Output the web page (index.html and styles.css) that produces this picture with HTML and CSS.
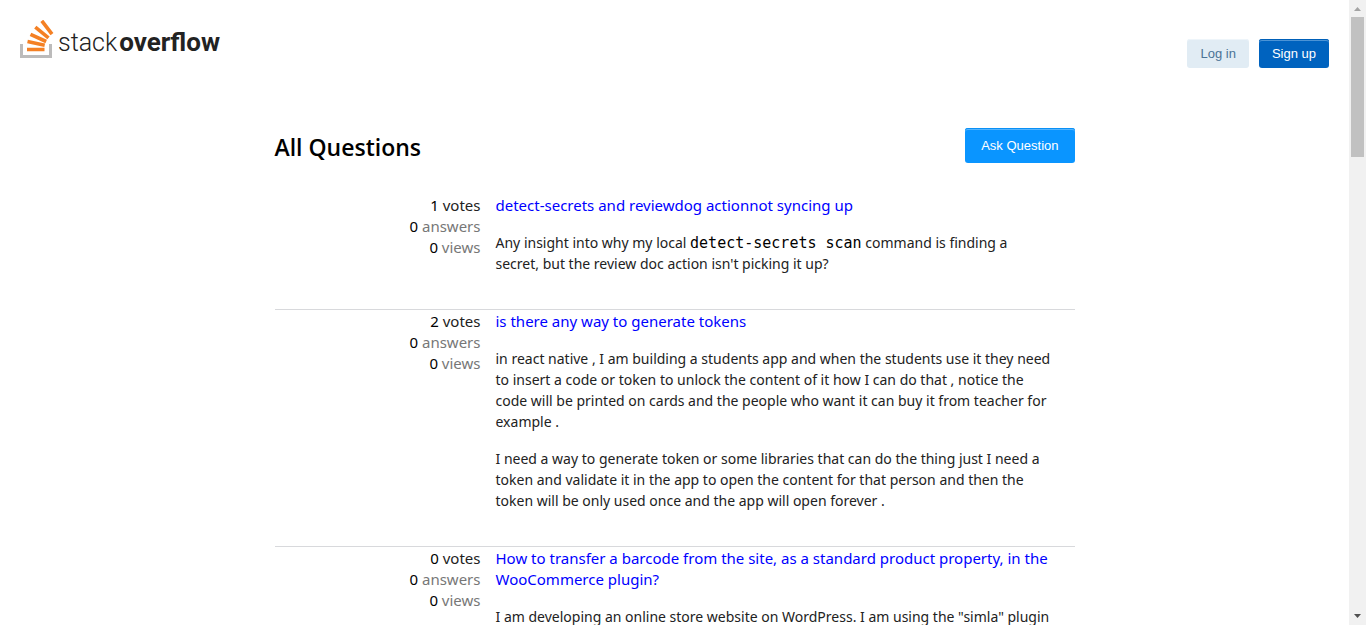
FILE: index.html
```html
<!DOCTYPE html>
<html lang="en">
<head>
<meta charset="utf-8">
<title>All Questions - Stack Overflow</title>
<link rel="stylesheet" href="styles.css">
</head>
<body>
<div class="page">
  <header class="top">
    <a class="logo" href="#">
      <svg class="logo-icon" viewBox="20 20 34 38" aria-hidden="true">
        <path d="M21.5 44v12.500h29V44" fill="none" stroke="#bcbbbb" stroke-width="3"/>
        <path d="M27 49.5h17.5M27.500 41.600l17.2 3.6M30.500 34.300l15.7 7.2M35.300 27.200l13.200 10.600M41.800 20.800l10.200 13.400" fill="none" stroke="#f48024" stroke-width="3.6"/>
      </svg>
      <span class="wordmark"><span class="light">stack</span><b>overflow</b></span>
    </a>
    <nav class="account">
      <button class="btn btn-login" type="button">Log in</button>
      <button class="btn btn-signup" type="button">Sign up</button>
    </nav>
  </header>
  <main class="content">
    <div class="heading">
      <h1>All Questions</h1>
      <button class="btn btn-ask" type="button">Ask Question</button>
    </div>
    <article class="question">
      <div class="stats">
        <div>1 <span class="votes">votes</span></div>
        <div>0 <span class="muted">answers</span></div>
        <div>0 <span class="muted">views</span></div>
      </div>
      <div class="summary">
        <a class="title" href="#">detect-secrets and reviewdog actionnot syncing up</a>
        <p>Any insight into why my local <code>detect-secrets scan</code> command is finding a secret, but the review doc action isn't picking it up?</p>
      </div>
    </article>
    <article class="question">
      <div class="stats">
        <div>2 <span class="votes">votes</span></div>
        <div>0 <span class="muted">answers</span></div>
        <div>0 <span class="muted">views</span></div>
      </div>
      <div class="summary">
        <a class="title" href="#">is there any way to generate tokens</a>
        <p>in react native , I am building a students app and when the students use it they need to insert a code or token to unlock the content of it how I can do that , notice the code will be printed on cards and the people who want it can buy it from teacher for example .</p>
        <p>I need a way to generate token or some libraries that can do the thing just I need a token and validate it in the app to open the content for that person and then the token will be only used once and the app will open forever .</p>
      </div>
    </article>
    <article class="question">
      <div class="stats">
        <div>0 <span class="votes">votes</span></div>
        <div>0 <span class="muted">answers</span></div>
        <div>0 <span class="muted">views</span></div>
      </div>
      <div class="summary">
        <a class="title" href="#">How to transfer a barcode from the site, as a standard product property, in the WooCommerce plugin?</a>
        <p>I am developing an online store website on WordPress. I am using the "simla" plugin</p>
      </div>
    </article>
  </main>
</div>
<div class="scrollbar" aria-hidden="true">
  <svg class="arrow" viewBox="0 0 17 17"><path d="M5 11h7L8.500 7z" fill="#a3a3a3"/></svg>
  <div class="thumb"></div>
  <svg class="arrow arrow-down" viewBox="0 0 17 17"><path d="M5 6h7L8.500 10z" fill="#505050"/></svg>
</div>
</body>
</html>
```
FILE: styles.css
```css
* { box-sizing: border-box; }

body {
  margin: 0;
  display: flex;
  height: 100vh;
  overflow: hidden;
  background: #fff;
  color: #000;
  font-family: "Noto Sans", "Open Sans", sans-serif;
  font-size: 15px;
  line-height: 21px;
}

.page {
  flex: 1;
  min-width: 0;
  overflow: hidden;
}

.top {
  display: flex;
  justify-content: space-between;
  align-items: flex-start;
  padding: 20px 20px 0;
}

.logo {
  display: flex;
  gap: 4px;
  color: #222;
  text-decoration: none;
}

.logo-icon {
  width: 34px;
  height: 38px;
}

.wordmark {
  display: flex;
  align-items: baseline;
  gap: 2px;
  padding-top: 3px;
  font: 25px/38px Roboto, sans-serif;
}

.wordmark .light { font-weight: 300; }
.wordmark b { font-size: 26px; font-weight: 700; }

.account {
  display: flex;
  gap: 10px;
  padding-top: 19px;
}

.btn {
  border: 0;
  border-radius: 3px;
  font: 13px/15px "Liberation Sans", Arial, sans-serif;
}

.btn-login {
  padding: 7px 13px;
  background: #e1ecf4;
  color: #4b7396;
  box-shadow: inset 0 1px 0 #eef5fa;
}

.btn-signup {
  padding: 7px 13px;
  background: #0063bf;
  color: #fff;
  box-shadow: inset 0 1px 0 #0060b8, inset 0 2px 0 #4c94d6;
}

.btn-ask {
  padding: 10px 16px;
  background: #0a95ff;
  color: #fff;
  box-shadow: inset 0 1px 0 #0a90f5, inset 0 2px 0 #53b4ff;
}

.content {
  max-width: 800px;
  margin: 60px auto 0;
}

.heading {
  display: flex;
  justify-content: space-between;
  align-items: center;
  height: 35px;
  margin-bottom: 31px;
}

h1 {
  margin: 0;
  padding-top: 2px;
  font-family: "Open Sans", sans-serif;
  font-size: 23px;
  font-weight: 600;
  line-height: 32px;
}

.question {
  display: grid;
  grid-template-columns: 206px 1fr;
  column-gap: 15px;
  padding: 1px 23px 19px 0;
  border-bottom: 1px solid #d8d9dc;
}

.stats { text-align: right; }
.votes { color: #222; }
.muted { color: #777; }

.title {
  display: block;
  color: #00f;
  text-decoration: none;
}

p {
  margin: 16px 0;
  color: #222;
  font-size: 14px;
}

code {
  color: #000;
  font: 15px/16px "DejaVu Sans Mono", monospace;
}

.scrollbar {
  display: flex;
  flex-direction: column;
  width: 17px;
  background: #f1f1f1;
}

.arrow {
  width: 17px;
  height: 17px;
}

.thumb {
  height: 140px;
  margin: 0 2px;
  background: #c1c1c1;
}

.arrow-down { margin-top: auto; }
```
